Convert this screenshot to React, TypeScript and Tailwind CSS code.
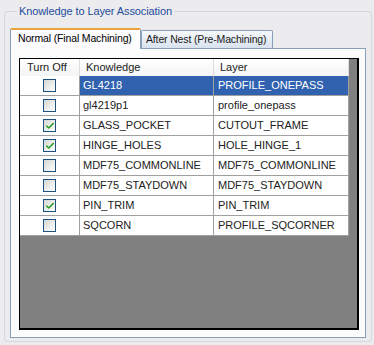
import { Check } from "lucide-react";

interface AssociationRow {
  id: number;
  turnOff: boolean;
  knowledge: string;
  layer: string;
}

const rows: AssociationRow[] = [
  { id: 1, turnOff: false, knowledge: "GL4218", layer: "PROFILE_ONEPASS" },
  { id: 2, turnOff: false, knowledge: "gl4219p1", layer: "profile_onepass" },
  { id: 3, turnOff: true, knowledge: "GLASS_POCKET", layer: "CUTOUT_FRAME" },
  { id: 4, turnOff: true, knowledge: "HINGE_HOLES", layer: "HOLE_HINGE_1" },
  { id: 5, turnOff: false, knowledge: "MDF75_COMMONLINE", layer: "MDF75_COMMONLINE" },
  { id: 6, turnOff: false, knowledge: "MDF75_STAYDOWN", layer: "MDF75_STAYDOWN" },
  { id: 7, turnOff: true, knowledge: "PIN_TRIM", layer: "PIN_TRIM" },
  { id: 8, turnOff: false, knowledge: "SQCORN", layer: "PROFILE_SQCORNER" },
];

const CheckBox = ({ checked }: { checked: boolean }) => {
  return (
    <div className="w-[13px] h-[13px] border border-[#1c5180] bg-gradient-to-br from-[#d6d6d2] to-[#ffffff] flex items-center justify-center">
      {checked && <Check size={10} strokeWidth={3.5} className="text-[#1e9a1e]" />}
    </div>
  );
};

const AssociationGrid = ({ selectedId }: { selectedId: number }) => {
  return (
    <div className="flex-1 border border-black border-r-2 border-b-2 bg-[#808080] overflow-hidden">
      <div className="w-[329px] grid grid-cols-[60px_134px_135px]">
        <div className="h-[17px] bg-gradient-to-b from-white to-[#f4f4f4] pl-[7px] leading-[17px] border-r border-[#dcdcdc]">
          Turn Off
        </div>
        <div className="h-[17px] bg-gradient-to-b from-white to-[#f4f4f4] pl-[6px] leading-[17px] border-r border-[#dcdcdc]">
          Knowledge
        </div>
        <div className="h-[17px] bg-gradient-to-b from-white to-[#f4f4f4] pl-[6px] leading-[17px] border-r border-[#dcdcdc]">
          Layer
        </div>
        {rows.map((row) => {
          const selected = row.id === selectedId;
          const cell = selected
            ? "bg-[#3162b0] text-white"
            : "bg-white text-[#222222]";
          return [
            <div
              key={`c${row.id}`}
              className="h-[20px] bg-white border-r border-b border-[#a0a0a0] flex items-center justify-center"
            >
              <CheckBox checked={row.turnOff} />
            </div>,
            <div
              key={`k${row.id}`}
              className={`h-[20px] ${cell} border-r border-b border-[#a0a0a0] pl-[3px] leading-[19px] whitespace-nowrap overflow-hidden`}
            >
              {row.knowledge}
            </div>,
            <div
              key={`l${row.id}`}
              className={`h-[20px] ${cell} border-r border-b border-[#a0a0a0] pl-[4px] leading-[19px] whitespace-nowrap overflow-hidden`}
            >
              {row.layer}
            </div>,
          ];
        })}
      </div>
    </div>
  );
};

const App = () => {
  return (
    <div
      className="w-[374px] h-[345px] bg-[#ecebee] pt-[5px] pl-[4px] pr-[2px] pb-[3px] text-[11px] text-[#222222]"
      style={{ fontFamily: '"Liberation Sans", Arial, sans-serif' }}
    >
      <fieldset className="h-full border border-[#d3d8de] rounded-[3px] px-[5px] pb-[3px] flex flex-col">
        <legend className="ml-[7px] px-[2px] leading-[13px] text-[#1f4e9b] tracking-[-0.1px]">
          Knowledge to Layer Association
        </legend>
        <div className="mt-[10px] flex items-end h-[21px] relative z-10 text-[10.5px] tracking-[-0.15px] whitespace-nowrap">
          <div className="h-[21px] w-[131px] bg-[#fcfcfe] border-x border-[#8a9fb8] border-t-2 border-t-[#eaa33a] rounded-t-[2px] pl-[7px] leading-[17px] text-black overflow-hidden">
            Normal (Final Machining)
          </div>
          <div className="h-[18px] mb-[1px] w-[132px] bg-gradient-to-b from-[#f6f8fb] to-[#d9e2ee] border border-b-0 border-[#8a9fb8] rounded-t-[2px] pl-[4px] leading-[17px] text-[#1a1a1a] overflow-hidden">
            After Nest (Pre-Machining)
          </div>
        </div>
        <div className="-mt-[1px] flex-1 border border-[#8a9fb8] bg-[#fcfcfc] pt-[9px] pl-[8px] pr-[6px] pb-[7px] flex flex-col">
          <AssociationGrid selectedId={1} />
        </div>
      </fieldset>
    </div>
  );
};

export default App;
